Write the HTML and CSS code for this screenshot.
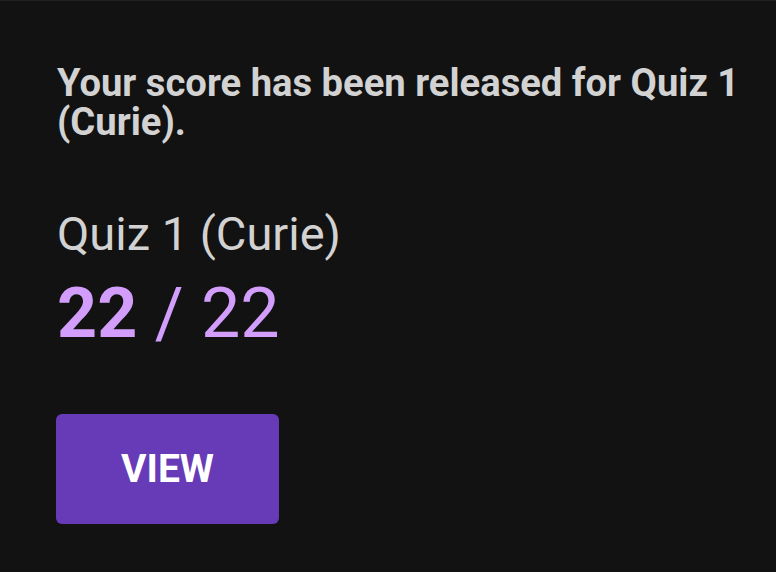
FILE: index.html
```html
<!DOCTYPE html>
<html lang="en">
<head>
  <meta charset="UTF-8" />
  <meta name="viewport" content="width=device-width, initial-scale=1.0"/>
  <title>Score released</title>
  <link rel="stylesheet" href="styles.css">
</head>
<body>

  <div class="notice">
    <h1 class="notice-title">Your score has been released for Quiz 1 (Curie).</h1>
    <div class="quiz-name">Quiz 1 (Curie)</div>
    <div class="score"><b>22</b> / 22</div>
    <button class="view">VIEW</button>
  </div>

</body>
</html>
```

FILE: styles.css
```css
body {
  margin: 0;
  background: #121212;
  border-top: 1px solid #222226;
  font-family: Roboto, "Liberation Sans", sans-serif;
  color: #d2d2d2;
  height: 571px;
}

.notice {
  padding: 63px 20px 0 57px;
}

.notice-title {
  margin: 0;
  font-size: 38.2px;
  font-weight: 700;
  line-height: 39px;
}

.quiz-name {
  margin-top: 64px;
  font-size: 47px;
  line-height: 55px;
}

.score {
  margin-top: 17px;
  font-size: 70px;
  line-height: 70px;
  color: #d29dfb;
}

.score b {
  font-weight: 700;
}

.view {
  display: block;
  margin: 66px 0 0 -1px;
  width: 223px;
  height: 110px;
  border: none;
  border-radius: 6px;
  background: #673ab7;
  color: #fff;
  font-family: inherit;
  font-size: 39px;
  font-weight: 700;
  cursor: pointer;
}
```
